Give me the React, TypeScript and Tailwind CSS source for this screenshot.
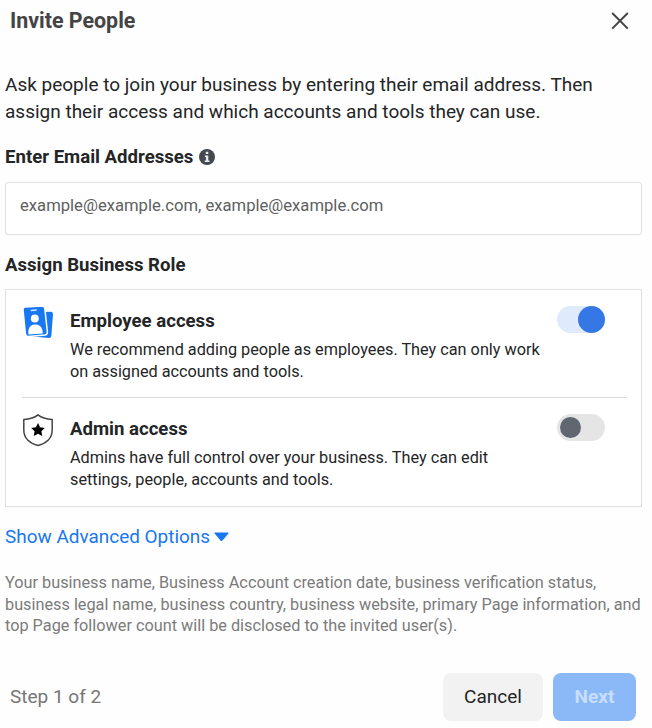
import React, { useState } from "react";

function Toggle({ on, label, onChange }: { on: boolean; label: string; onChange: () => void }) {
  return (
    <button
      type="button"
      role="switch"
      aria-checked={on}
      aria-label={label}
      onClick={onChange}
      className={`flex h-[27px] w-12 shrink-0 items-center rounded-full ${on ? "justify-end bg-[#dfeafd]" : "justify-start bg-[#e5e5e5] pl-[3px]"}`}
    >
      <span className={`rounded-full ${on ? "size-[27px] bg-[#3578e5]" : "size-[21px] bg-[#606770]"}`} />
    </button>
  );
}

function BadgeIcon() {
  return (
    <svg viewBox="0 0 32 34" className="h-[34px] w-8 shrink-0" fill="none">
      <path d="M12 6.300 29 5.800Q31.200 5.900 31 8.300L29.300 30Q29 32.100 26.800 32L8 30.300Z" fill="#1877f2" />
      <path d="M3 .9 19.800 0Q22.400 0 22.800 2.500L25.400 26Q25.400 28.800 23 29.100L6 30.500Q3.700 30.500 3.400 27.900L1 3.700Q.9 1.100 3 .9Z" fill="#1877f2" stroke="#fff" strokeWidth="1.500" />
      <path d="m9.300 4.500 4.900-.5" stroke="#d5e6ff" strokeWidth="1.500" strokeLinecap="round" />
      <circle cx="12.800" cy="12.600" r="4" fill="#fff" />
      <path d="M6.300 28.600Q5.600 20.500 10.800 18.800Q15 18 18 19.900Q20.800 22 20.700 27.500Z" fill="#fff" />
    </svg>
  );
}

function ShieldIcon() {
  return (
    <svg viewBox="0 0 32 34" className="h-[34px] w-8 shrink-0" fill="none">
      <path d="M16 .9C12.500 3.800 7 5.200 1.800 5.400V16C1.800 24.500 8 29.800 16 31.400C24 29.800 30.200 24.500 30.200 16V5.400C25 5.200 19.500 3.800 16 .9Z" stroke="#444" strokeWidth="1.500" strokeLinejoin="round" />
      <path d="m16 9 2.100 4.300 4.700.7-3.400 3.300.8 4.700-4.200-2.200-4.200 2.200.8-4.700-3.400-3.300 4.700-.7Z" fill="#000" />
    </svg>
  );
}

type RoleProps = { icon: React.ReactNode; title: string; lines: string[]; on: boolean; onChange: () => void };

function Role({ icon, title, lines, on, onChange }: RoleProps) {
  return (
    <div className="flex items-start">
      {icon}
      <div className="ml-4 flex-1 pt-[3px]">
        <h3 className="text-[18.600px] leading-6 font-bold whitespace-nowrap">{title}</h3>
        <p className="mt-[6px] text-[16.250px] leading-[21.500px] whitespace-nowrap">
          {lines[0]}<br />{lines[1]}
        </p>
      </div>
      <div className="mr-[22px]">
        <Toggle on={on} label={title} onChange={onChange} />
      </div>
    </div>
  );
}

export default function App() {
  const [employee, setEmployee] = useState(true);
  const [admin, setAdmin] = useState(false);
  return (
    <main className="h-[728px] w-[652px] overflow-hidden bg-[#fefefe] pl-[5px] pr-[10px] font-['Roboto',sans-serif] text-[#242526]">
      <header className="flex h-[42px] items-center justify-between pl-[5px] pr-[13px]">
        <h1 className="pt-px text-[21.400px] font-bold whitespace-nowrap text-[#444]">Invite People</h1>
        <button type="button" aria-label="Close">
          <svg viewBox="0 0 18 18" className="size-[18px]" fill="none" stroke="#444" strokeWidth="2">
            <path d="m1.200 1 15.600 15.600m0-15.600L1.200 16.600" />
          </svg>
        </button>
      </header>

      <p className="mt-[29px] text-[19px] leading-[27px] whitespace-nowrap">
        Ask people to join your business by entering their email address. Then<br />
        assign their access and which accounts and tools they can use.
      </p>

      <div className="mt-[18px] flex h-7 items-center">
        <h2 className="pt-px text-[18.600px] font-bold whitespace-nowrap">Enter Email Addresses</h2>
        <svg viewBox="0 0 16 16" className="ml-[6px] size-4">
          <circle cx="8" cy="8" r="8" fill="#444950" />
          <path d="M6.800 2.800h2.500v2.300H6.800zM5.800 6.400h3.500v5h1.200v1.500H5.700v-1.500h1.200V7.900H5.800z" fill="#e9eaec" />
        </svg>
      </div>
      <input
        type="text"
        aria-label="Enter Email Addresses"
        placeholder="example@example.com, example@example.com"
        className="mt-[11px] block h-[53px] w-full rounded-[3px] border border-[#dddfe2] bg-white px-[14px] pb-[6px] text-[16.650px] outline-none placeholder:text-[#606060]"
      />

      <h2 className="mt-[16px] text-[18.600px] leading-7 font-bold whitespace-nowrap">Assign Business Role</h2>
      <section className="mt-[10px] h-[218px] border border-[#dddfe2] bg-white pt-[16px] pr-[14px] pl-[16px]">
        <div className="h-[92px] border-b border-[#dcdcdc]">
          <Role
            icon={<BadgeIcon />}
            title="Employee access"
            lines={["We recommend adding people as employees. They can only work", "on assigned accounts and tools."]}
            on={employee}
            onChange={() => setEmployee(!employee)}
          />
        </div>
        <div className="pt-[16px]">
          <Role
            icon={<ShieldIcon />}
            title="Admin access"
            lines={["Admins have full control over your business. They can edit", "settings, people, accounts and tools."]}
            on={admin}
            onChange={() => setAdmin(!admin)}
          />
        </div>
      </section>

      <button type="button" className="mt-[16px] flex h-7 items-center gap-[4px] text-[18.950px] whitespace-nowrap text-[#1877f2]">
        Show Advanced Options
        <svg viewBox="0 0 15 10" className="mb-px h-[10px] w-[15px]" fill="#1877f2">
          <path d="M1 .5h13q1 0 .4.900L8.300 8.700q-.8.800-1.600 0L.6 1.400Q0 .5 1 .5Z" />
        </svg>
      </button>

      <p className="mt-[21px] text-[16.270px] leading-[21.500px] whitespace-nowrap text-[#7b7b7b]">
        Your business name, Business Account creation date, business verification status,<br />
        business legal name, business country, business website, primary Page information, and<br />
        top Page follower count will be disclosed to the invited user(s).
      </p>

      <footer className="mt-[36px] flex h-12 items-center pl-[5px] pr-[6px]">
        <span className="flex-1 pt-[2px] text-[19px] whitespace-nowrap text-[#767676]">Step 1 of 2</span>
        <button type="button" className="h-12 w-[100px] rounded-lg bg-[#f2f2f2] pt-[2px] text-[19px]">Cancel</button>
        <button type="button" className="ml-[10px] h-12 w-[83px] rounded-lg bg-[#8bb9f8] pt-[2px] text-[19px] font-bold text-[#c7deff]">Next</button>
      </footer>
    </main>
  );
}
